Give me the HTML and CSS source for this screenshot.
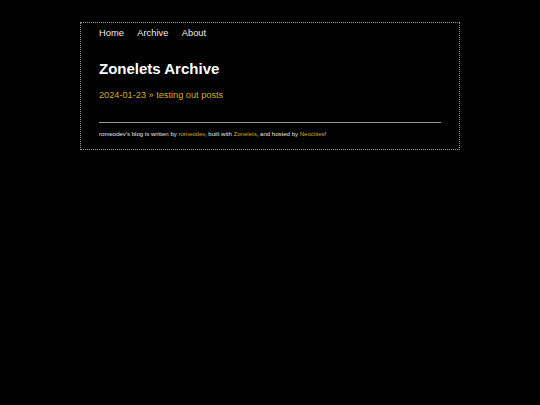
FILE: index.html
```html
<!DOCTYPE html>
<html>
<head>
<meta charset="utf-8">
<link rel="stylesheet" href="styles.css">
</head>
<body>
<div class="container">
  <nav class="nav">
    <a href="#">Home</a>
    <a href="#">Archive</a>
    <a href="#">About</a>
  </nav>
  <h1 class="title">Zonelets Archive</h1>
  <ul class="posts">
    <li><a class="gold" href="#">2024-01-23 » testing out posts</a></li>
  </ul>
  <hr class="rule">
  <footer class="footer">romeodev's blog is written by <a class="gold" href="#">romeodev</a>, built with <a class="gold" href="#">Zonelets</a>, and hosted by <a class="gold" href="#">Neocities</a>!</footer>
</div>
</body>
</html>
```
FILE: styles.css
```css
html, body {
  margin: 0;
  padding: 0;
  background: #000;
  font-family: "Liberation Sans", Arial, sans-serif;
  color: #eee;
}
.container {
  width: 380px;
  box-sizing: border-box;
  margin: 22px auto 0;
  border: 1px dotted #9a9a9a;
  padding: 0 18px 11px;
}
.nav {
  display: flex;
  gap: 13.5px;
  padding-top: 5px;
  font-size: 9.3px;
  line-height: 11px;
}
.nav a {
  color: #eee;
  text-decoration: none;
}
.title {
  font-size: 15px;
  font-weight: bold;
  margin: 21px 0 0;
  line-height: 18px;
  color: #fff;
}
.posts {
  list-style: none;
  margin: 12px 0 0;
  padding: 0;
  font-size: 9.2px;
  line-height: 11px;
}
.gold {
  color: #d8a928;
  text-decoration: none;
}
.rule {
  border: 0;
  border-top: 1px solid #999;
  margin: 21px 0 0;
  height: 0;
}
.footer {
  font-size: 6.05px;
  line-height: 8px;
  margin-top: 7px;
  color: #e6e6e6;
}
```
